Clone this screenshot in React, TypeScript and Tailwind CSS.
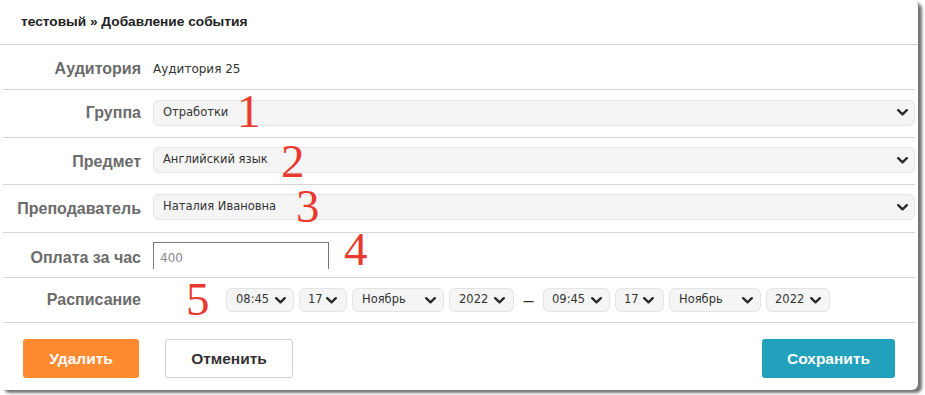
import React from 'react';

const sans = { fontFamily: '"Liberation Sans", Arial, sans-serif' };

const Chevron = () => (
  <svg width="11" height="7" viewBox="0 0 11 7" className="shrink-0">
    <path d="M1.2 1.2 L5.5 5.3 L9.8 1.2" fill="none" stroke="#2b2b2b" strokeWidth="2.4" strokeLinecap="round" strokeLinejoin="round" />
  </svg>
);

interface SelectProps {
  value: string;
  className?: string;
}

const FakeSelect = ({ value, className = '' }: SelectProps) => (
  <div
    className={`flex items-center justify-between rounded-[6px] border border-[#e4e4e4] bg-[#f5f5f5] text-[11.5px] text-[#333] font-['DejaVu_Sans',sans-serif] ${className}`}
  >
    <span>{value}</span>
    <Chevron />
  </div>
);

const Label = ({ children }: { children: React.ReactNode }) => (
  <div className="w-[138px] shrink-0 text-right text-[16px] font-bold leading-[20px] text-[#6b6b6b] font-['Liberation_Sans',Arial,sans-serif]">
    {children}
  </div>
);

const Mark = ({ n, className }: { n: string; className: string }) => (
  <span className={`absolute text-[47px] leading-none text-[#e8392e] font-['Liberation_Serif',serif] ${className}`}>
    {n}
  </span>
);

const App = () => {
  return (
    <div className="relative w-[925px] h-[395px] bg-white overflow-hidden">
      <div className="w-[918px] h-[390px] bg-white rounded-[6px] shadow-[4px_3px_3px_rgba(0,0,0,0.55)] flex flex-col">
        <div className="h-[45px] shrink-0 border-b border-[#d2d2d2] flex items-center pl-[21px] text-[13.7px] font-bold text-[#222]" style={sans}>
          тестовый » Добавление события
        </div>

        <div className="px-[3px]">
          <div className="h-[45px] flex items-center gap-[12px] border-b border-[#d6d6d6] pt-[3px]">
            <Label>Аудитория</Label>
            <span className="text-[12px] text-[#333] font-['DejaVu_Sans',sans-serif]">Аудитория 25</span>
          </div>

          <div className="h-[48px] flex items-center gap-[12px] border-b border-[#d6d6d6] pb-[2px]">
            <Label>Группа</Label>
            <FakeSelect value="Отработки" className="flex-1 h-[26px] pl-[9px] pr-[6px]" />
          </div>

          <div className="h-[47px] flex items-center gap-[12px] border-b border-[#d6d6d6] pb-[2px]">
            <Label><span className="inline-block pt-[4px]">Предмет</span></Label>
            <FakeSelect value="Английский язык" className="flex-1 h-[26px] pl-[9px] pr-[6px]" />
          </div>

          <div className="h-[48px] flex items-center gap-[12px] border-b border-[#d6d6d6] pb-[3px]">
            <Label><span className="inline-block pt-[4px]">Преподаватель</span></Label>
            <FakeSelect value="Наталия Ивановна" className="flex-1 h-[26px] pl-[9px] pr-[6px]" />
          </div>

          <div className="h-[45px] flex items-end gap-[12px] border-b border-[#d6d6d6] pb-[8px]">
            <Label><span className="inline-block pb-[1px]">Оплата за час</span></Label>
            <div className="w-[176px] h-[27px] border border-b-0 border-[#777] flex items-center pl-[6px] pt-[3px] text-[12px] text-[#8a8a8a] font-['DejaVu_Sans',sans-serif]">
              400
            </div>
          </div>

          <div className="h-[45px] flex items-center gap-[12px] border-b border-[#d6d6d6]">
            <Label>Расписание</Label>
            <div className="flex items-center gap-[5px] pl-[73px]">
              <FakeSelect value="08:45" className="w-[68px] h-[24px] pl-[9px] pr-[7px]" />
              <FakeSelect value="17" className="w-[48px] h-[24px] pl-[8px] pr-[9px]" />
              <FakeSelect value="Ноябрь" className="w-[92px] h-[24px] pl-[9px] pr-[7px]" />
              <FakeSelect value="2022" className="w-[65px] h-[24px] pl-[9px] pr-[8px]" />
              <span className="w-[19px] text-center text-[18px] leading-none text-[#333] font-['Liberation_Sans',sans-serif]">–</span>
              <FakeSelect value="09:45" className="w-[67px] h-[24px] pl-[8px] pr-[7px]" />
              <FakeSelect value="17" className="w-[49px] h-[24px] pl-[8px] pr-[9px]" />
              <FakeSelect value="Ноябрь" className="w-[92px] h-[24px] pl-[9px] pr-[7px]" />
              <FakeSelect value="2022" className="w-[64px] h-[24px] pl-[8px] pr-[8px]" />
            </div>
          </div>
        </div>

        <div className="flex items-center justify-between px-[23px] pt-[16px]" style={sans}>
          <div className="flex items-center gap-[26px]">
            <button className="w-[116px] h-[39px] rounded-[3px] bg-[#ff8a30] text-white text-[15.5px] font-bold">
              Удалить
            </button>
            <button className="w-[128px] h-[39px] rounded-[3px] border border-[#cfcfcf] bg-white text-[#333] text-[15.5px] font-bold">
              Отменить
            </button>
          </div>
          <button className="w-[133px] h-[39px] rounded-[3px] bg-[#21a1bb] text-white text-[15.5px] font-bold">
            Сохранить
          </button>
        </div>
      </div>

      <Mark n="1" className="left-[237px] top-[88px]" />
      <Mark n="2" className="left-[281px] top-[138px]" />
      <Mark n="3" className="left-[296px] top-[183px]" />
      <Mark n="4" className="left-[344px] top-[226px]" />
      <Mark n="5" className="left-[186px] top-[276px]" />
    </div>
  );
};

export default App;
